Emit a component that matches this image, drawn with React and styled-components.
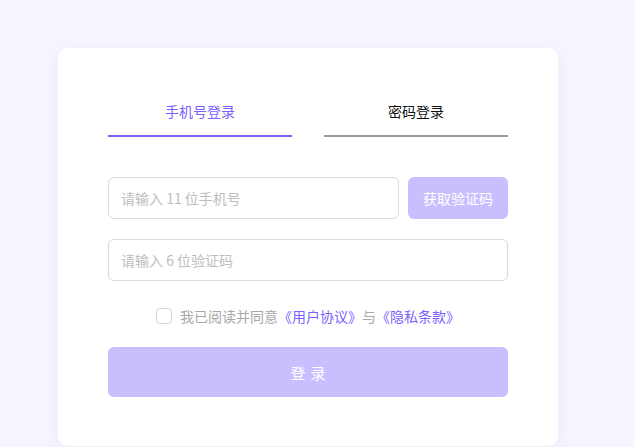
import React, { useState } from 'react';
import styled, { createGlobalStyle } from 'styled-components';

const primary = '#7b5fff';

const GlobalStyle = createGlobalStyle`
  html, body {
    margin: 0;
    padding: 0;
    background: #f7f5ff;
    font-family: "Noto Sans CJK SC", "Noto Sans", sans-serif;
  }
  * { box-sizing: border-box; }
`;

const Page = styled.div`
  min-height: 447px;
  padding: 48px 0 0 58px;
`;

const Card = styled.div`
  width: 500px;
  height: 398px;
  background: #fff;
  border-radius: 10px;
  box-shadow: 0 4px 20px rgba(110, 90, 220, 0.08);
  padding: 52px 50px 49px;
  display: flex;
  flex-direction: column;
`;

const Tabs = styled.div`
  display: flex;
  gap: 32px;
`;

const Tab = styled.button`
  flex: 1;
  background: none;
  border: none;
  border-bottom: 2px solid ${p => (p.$active ? primary : '#999')};
  padding: 0 0 13px;
  font-family: inherit;
  font-size: 14px;
  line-height: 22px;
  color: ${p => (p.$active ? primary : '#111')};
  cursor: pointer;
`;

const Form = styled.div`
  margin-top: 40px;
  display: flex;
  flex-direction: column;
  gap: 20px;
`;

const Row = styled.div`
  display: flex;
  gap: 9px;
`;

const Input = styled.input`
  flex: 1;
  min-width: 0;
  height: 42px;
  border: 1px solid #dadada;
  border-radius: 6px;
  padding: 0 12px;
  font-family: inherit;
  font-size: 14px;
  color: #333;
  outline: none;
  &::placeholder { color: #bdbdbd; }
`;

const CodeButton = styled.button`
  width: 100px;
  height: 42px;
  border: none;
  border-radius: 6px;
  background: #c9bfff;
  color: #fff;
  font-family: inherit;
  font-size: 14px;
`;

const Agree = styled.label`
  margin-top: 25px;
  height: 20px;
  display: flex;
  align-items: center;
  justify-content: center;
  gap: 8px;
  font-size: 14px;
  color: #a8a8a8;
`;

const Check = styled.span`
  width: 16px;
  height: 16px;
  border: 1px solid #d4d4d4;
  border-radius: 4px;
  background: #fff;
`;

const Link = styled.a`
  color: ${primary};
  text-decoration: none;
`;

const Submit = styled.button`
  margin-top: 21px;
  height: 50px;
  border: none;
  border-radius: 6px;
  background: #c9bfff;
  color: #fff;
  font-family: inherit;
  font-size: 15px;
  letter-spacing: 5px;
  text-indent: 5px;
`;

export default function App() {
  const [tab, setTab] = useState('sms');
  return (
    <Page>
      <GlobalStyle />
      <Card>
        <Tabs>
          <Tab $active={tab === 'sms'} onClick={() => setTab('sms')}>手机号登录</Tab>
          <Tab $active={tab === 'pwd'} onClick={() => setTab('pwd')}>密码登录</Tab>
        </Tabs>
        <Form>
          <Row>
            <Input placeholder="请输入 11 位手机号" />
            <CodeButton>获取验证码</CodeButton>
          </Row>
          <Row>
            <Input placeholder="请输入 6 位验证码" />
          </Row>
        </Form>
        <Agree>
          <Check />
          <span>
            我已阅读并同意<Link>《用户协议》</Link>与<Link>《隐私条款》</Link>
          </span>
        </Agree>
        <Submit>登录</Submit>
      </Card>
    </Page>
  );
}
